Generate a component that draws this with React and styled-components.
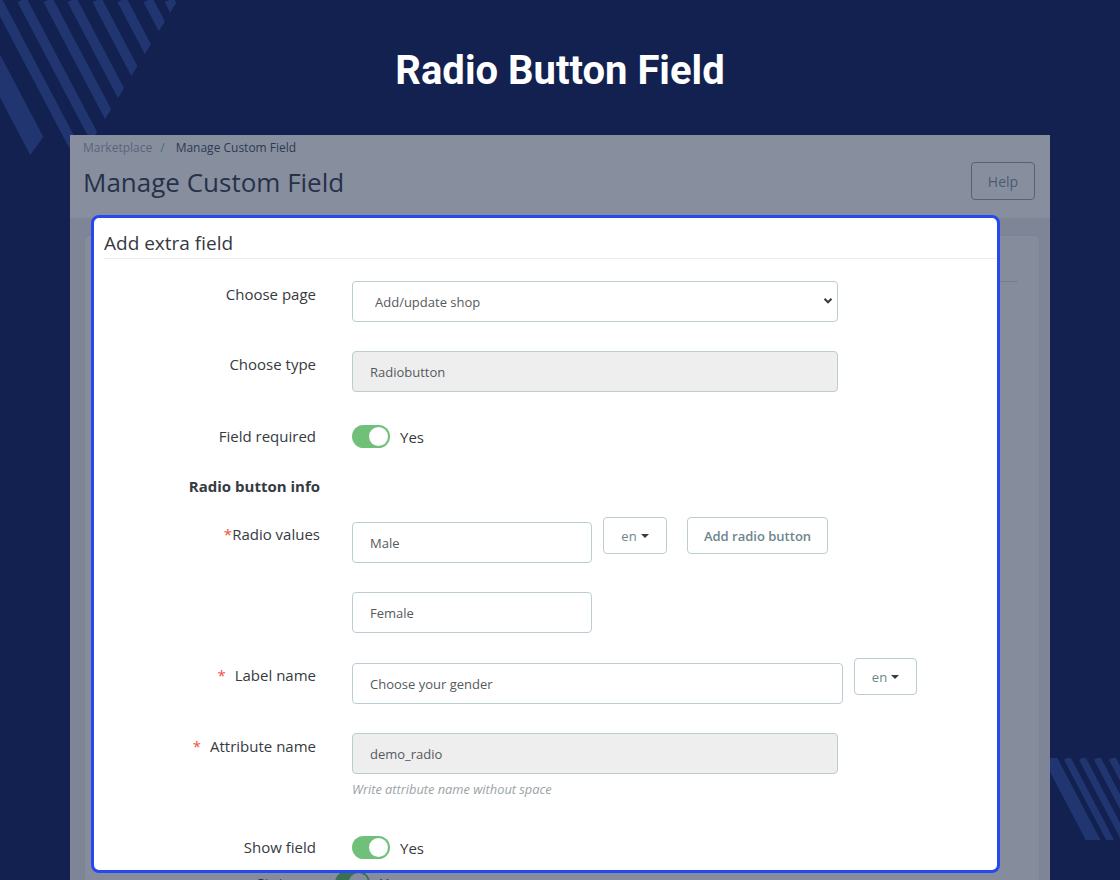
import React from 'react'
import styled, { createGlobalStyle } from 'styled-components'

const GlobalStyle = createGlobalStyle`
  body {
    margin: 0;
    background: #122150;
    font-family: 'Open Sans', 'Liberation Sans', sans-serif;
  }

  * {
    box-sizing: border-box;
  }
`

const Stage = styled.div`
  position: relative;
  width: 1120px;
  height: 880px;
  overflow: hidden;
  background: #122150;
`

const Decor = styled.svg`
  position: absolute;
  z-index: 0;
  left: ${(p) => p.$left}px;
  top: ${(p) => p.$top}px;
`

const Heading = styled.h1`
  position: relative;
  z-index: 1;
  margin: 0;
  padding-top: 46px;
  height: 97px;
  line-height: 50px;
  text-align: center;
  font-family: Roboto, 'Liberation Sans', sans-serif;
  font-weight: 700;
  font-size: 40px;
  color: #fff;
`

const Shot = styled.div`
  position: relative;
  z-index: 1;
  margin: 38px 0 0 70px;
  width: 980px;
  height: 760px;
  background: #7d8597;
`

const AdminHeader = styled.header`
  display: flex;
  justify-content: space-between;
  height: 83px;
  padding: 5px 15px 0 13px;
  background: #878f9f;
`

const Breadcrumb = styled.div`
  font-size: 12px;
  line-height: 16px;
  color: #59647a;

  span {
    color: #2e3a52;
  }

  i {
    font-style: normal;
    color: #46705f;
    margin: 0 11px 0 8px;
  }
`

const PageTitle = styled.h2`
  margin: 9px 0 0;
  font-size: 26px;
  line-height: 34px;
  font-weight: 400;
  color: #27314a;
`

const HelpButton = styled.button`
  margin-top: 22px;
  width: 64px;
  height: 38px;
  border: 1px solid #56627a;
  border-radius: 4px;
  background: transparent;
  font-family: 'Open Sans', sans-serif;
  font-size: 14px;
  color: #4b5a72;
`

const Content = styled.div`
  padding: 17px 10px 0 14px;
`

const Card = styled.div`
  height: 700px;
  background: #858d9d;
  border: 1px solid #7b8394;
  border-radius: 5px;
`

const CardHead = styled.div`
  height: 46px;
  margin: 0 21px;
  border-bottom: 1px solid #778090;
`

const CardBody = styled.div`
  padding-top: 589px;
`

const StatusRow = styled.div`
  display: grid;
  grid-template-columns: 215px 1fr;
  column-gap: 35px;
  align-items: center;
  font-size: 15px;
  color: #2c3346;
`

const StatusLabel = styled.div`
  text-align: right;
  line-height: 20px;
`

const DimSwitch = styled.span`
  display: flex;
  align-items: center;
  gap: 10px;

  b {
    width: 35px;
    height: 23px;
    border-radius: 12px;
    background: #3d7052;
    border: 1px solid #3d7052;
    display: flex;
    justify-content: flex-end;
    padding: 1px;
  }

  b::after {
    content: '';
    width: 19px;
    height: 19px;
    border-radius: 50%;
    background: #858d9d;
  }
`

const Modal = styled.div`
  position: absolute;
  left: 21px;
  top: 80px;
  width: 909px;
  height: 658px;
  background: #fff;
  border: 3px solid #2548f0;
  border-radius: 8px;
  padding-left: 10px;
  color: #363a41;
`

const ModalTitle = styled.h3`
  margin: 0;
  padding-top: 12px;
  padding-bottom: 2px;
  font-size: 19px;
  line-height: 26px;
  font-weight: 400;
  color: #363a41;
  border-bottom: 1px solid #e9ebec;
`

const Row = styled.div`
  display: grid;
  grid-template-columns: 212px 1fr;
  column-gap: 36px;
  align-items: ${(p) => (p.$center ? 'center' : 'start')};
  margin-top: ${(p) => p.$mt}px;
`

const Label = styled.div`
  text-align: right;
  font-size: 15px;
  line-height: 20px;
  font-weight: ${(p) => (p.$bold ? 700 : 400)};
  color: #363a41;
  padding-top: ${(p) => p.$pt || 0}px;
  margin-right: ${(p) => p.$nudge || 0}px;
`

const Star = styled.span`
  color: #f54c3e;
  margin-right: ${(p) => (p.$gap ? 9 : 0)}px;
`

const Controls = styled.div`
  display: flex;
  align-items: flex-start;
  gap: 11px;
`

const Stack = styled.div`
  display: flex;
  flex-direction: column;
`

const Input = styled.input`
  width: ${(p) => p.$w}px;
  height: 41px;
  margin-top: ${(p) => p.$mt || 0}px;
  padding: 0 17px;
  border: 1px solid #bbcdd2;
  border-radius: 4px;
  background: ${(p) => (p.$muted ? '#eeeeee' : '#fff')};
  font-family: 'Open Sans', sans-serif;
  font-size: 13px;
  color: #555a5e;
  outline: none;
`

const SelectWrap = styled.div`
  position: relative;
  width: 486px;

  svg {
    position: absolute;
    right: 5px;
    top: 16px;
    pointer-events: none;
  }
`

const Select = styled.select`
  appearance: none;
  width: 100%;
  height: 41px;
  padding: 0 22px;
  border: 1px solid #bbcdd2;
  border-radius: 4px;
  background: #fff;
  font-family: 'Open Sans', sans-serif;
  font-size: 13px;
  color: #555a5e;
`

const Button = styled.button`
  height: 37px;
  width: ${(p) => p.$w}px;
  margin-left: ${(p) => p.$ml || 0}px;
  display: flex;
  align-items: center;
  justify-content: center;
  gap: 4px;
  border: 1px solid #bbcdd2;
  border-radius: 4px;
  background: #fff;
  font-family: 'Open Sans', sans-serif;
  font-size: 13px;
  font-weight: ${(p) => (p.$strong ? 600 : 400)};
  color: #6c868e;
`

const Caret = styled.span`
  width: 0;
  height: 0;
  border-left: 4px solid transparent;
  border-right: 4px solid transparent;
  border-top: 4px solid #363a41;
`

const Switch = styled.span`
  display: flex;
  align-items: center;
  gap: 10px;
  font-size: 15px;
  color: #363a41;

  b {
    width: 38px;
    height: 23px;
    border-radius: 12px;
    background: #71c07a;
    display: flex;
    justify-content: flex-end;
    padding: 2px;
  }

  b::after {
    content: '';
    width: 19px;
    height: 19px;
    border-radius: 50%;
    background: #fff;
  }
`

const SwitchLabel = styled(Label)`
  margin-top: -2px;
`

const Help = styled.div`
  margin-top: 7px;
  font-size: 12.8px;
  line-height: 16px;
  font-style: italic;
  color: #9aa3a7;
`

const Toggle = () => (
  <Switch>
    <b />
    Yes
  </Switch>
)

const LangButton = ({ w = 64 }) => (
  <Button $w={w}>
    en <Caret />
  </Button>
)

const thinTop = [-3, 22, 48, 72, 97, 122, 148, 169]
const thinBottom = [1067, 1082, 1097, 1112, 1127]

const App = () => (
  <Stage>
    <GlobalStyle />
    <Decor $left={0} $top={0} width="200" height="170">
      <defs>
        <clipPath id="tl-thin">
          <polygon points="0,0 178,0 80,160 0,160" />
        </clipPath>
        <clipPath id="tl-wide">
          <polygon points="0,0 142,0 0,197" />
        </clipPath>
      </defs>
      <g clipPath="url(#tl-thin)" stroke="#213670" strokeWidth="10">
        {thinTop.map((x) => (
          <line key={x} x1={x} y1={0} x2={x + 0.526 * 200} y2={200} />
        ))}
      </g>
      <g clipPath="url(#tl-wide)">
        <line x1={-40} y1={0} x2={-40 + 0.526 * 200} y2={200} stroke="#213670" strokeWidth="20" />
      </g>
    </Decor>
    <Decor $left={1040} $top={750} width="80" height="100">
      <defs>
        <clipPath id="br">
          <polygon points="0,8 80,8 80,90 0,90" />
        </clipPath>
      </defs>
      <g clipPath="url(#br)" stroke="#213670">
        {thinBottom.map((x) => (
          <line key={x} x1={x - 1040} y1={8} x2={x - 1040 + 0.526 * 90} y2={98} strokeWidth="7" />
        ))}
        <line x1={10} y1={8} x2={10 + 0.526 * 90} y2={98} strokeWidth="13" />
      </g>
    </Decor>

    <Heading>Radio Button Field</Heading>

    <Shot>
      <AdminHeader>
        <div>
          <Breadcrumb>
            Marketplace<i>/</i>
            <span>Manage Custom Field</span>
          </Breadcrumb>
          <PageTitle>Manage Custom Field</PageTitle>
        </div>
        <HelpButton>Help</HelpButton>
      </AdminHeader>
      <Content>
        <Card>
          <CardHead />
          <CardBody>
            <StatusRow>
              <StatusLabel>Status</StatusLabel>
              <DimSwitch>
                <b />
                Yes
              </DimSwitch>
            </StatusRow>
          </CardBody>
        </Card>
      </Content>

      <Modal>
        <ModalTitle>Add extra field</ModalTitle>

        <Row $mt={22}>
          <Label $pt={3}>Choose page</Label>
          <SelectWrap>
            <Select defaultValue="shop">
              <option value="shop">Add/update shop</option>
            </Select>
            <svg width="10" height="8" viewBox="0 0 10 8">
              <path d="M1.5 1.8 L5 5.3 L8.5 1.8" fill="none" stroke="#3a3a3a" strokeWidth="2" />
            </svg>
          </SelectWrap>
        </Row>

        <Row $mt={29}>
          <Label $pt={3}>Choose type</Label>
          <Input $w={486} $muted readOnly value="Radiobutton" />
        </Row>

        <Row $mt={33} $center>
          <SwitchLabel>Field required</SwitchLabel>
          <Toggle />
        </Row>

        <Row $mt={28}>
          <Label $bold $nudge={-4}>Radio button info</Label>
        </Row>

        <Row $mt={21}>
          <Label $pt={7} $nudge={-4}>
            <Star>*</Star>Radio values
          </Label>
          <Controls>
            <Input $w={240} $mt={5} readOnly value="Male" />
            <LangButton />
            <Button $w={141} $ml={9} $strong>
              Add radio button
            </Button>
          </Controls>
        </Row>

        <Row $mt={29}>
          <div />
          <Input $w={240} readOnly value="Female" />
        </Row>

        <Row $mt={25}>
          <Label $pt={7}>
            <Star $gap>*</Star>Label name
          </Label>
          <Controls>
            <Input $w={491} $mt={5} readOnly value="Choose your gender" />
            <LangButton w={63} />
          </Controls>
        </Row>

        <Row $mt={29}>
          <Label $pt={3}>
            <Star $gap>*</Star>Attribute name
          </Label>
          <Stack>
            <Input $w={486} $muted readOnly value="demo_radio" />
            <Help>Write attribute name without space</Help>
          </Stack>
        </Row>

        <Row $mt={39} $center>
          <SwitchLabel>Show field</SwitchLabel>
          <Toggle />
        </Row>
      </Modal>
    </Shot>
  </Stage>
)

export default App
